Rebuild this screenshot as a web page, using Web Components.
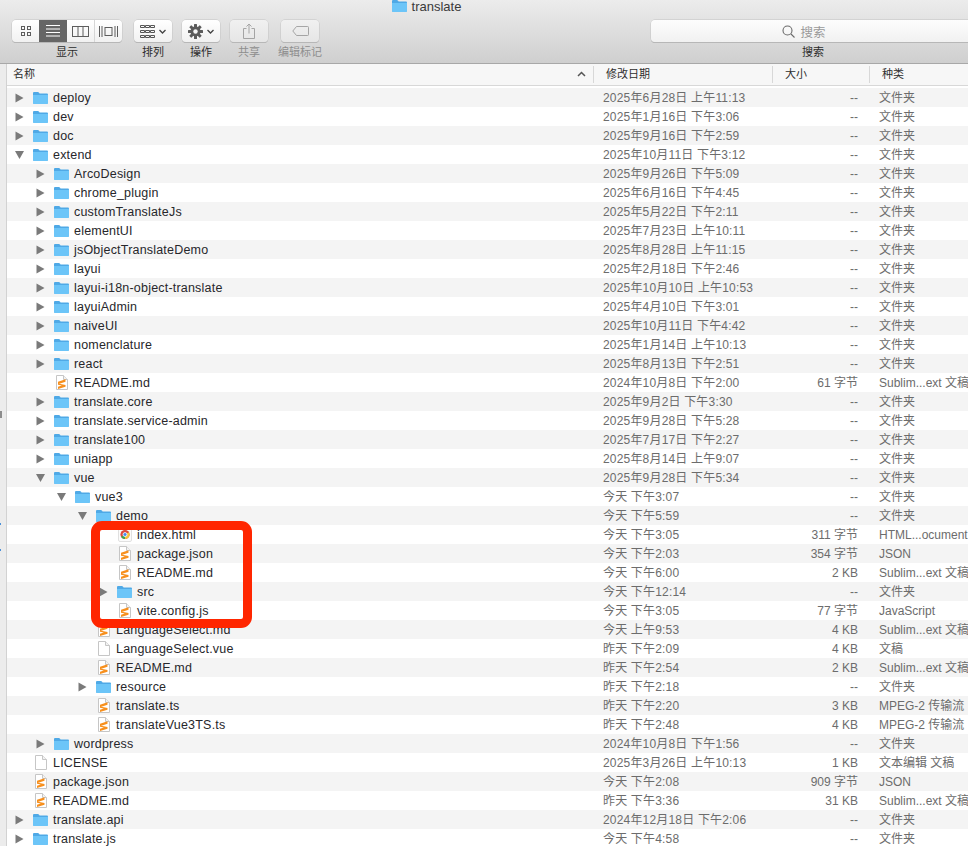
<!DOCTYPE html>
<html>
<head>
<meta charset="utf-8">
<title>translate</title>
<style>
  html, body { margin: 0; padding: 0; background: #fff; }
</style>
</head>
<body>
<finder-window>
  <finder-toolbar slot="toolbar"></finder-toolbar>
  <list-header slot="header"></list-header>
  <file-list slot="list"></file-list>
  <red-mark slot="mark"></red-mark>
</finder-window>

<script>
const FONT = `"Liberation Sans", "Noto Sans CJK SC", sans-serif`;

const folderSvg = `<svg width="17" height="14" viewBox="0 0 17 14"><path d="M1 2.200C1 1.500 1.500 1 2.200 1h3.600c.5 0 .8.200 1.100.6l.7 1h7.200c.7 0 1.200.5 1.200 1.200v8c0 .7-.5 1.200-1.200 1.200H2.200C1.500 13 1 12.500 1 11.800z" fill="#4fa9e6"/><path d="M1 4h15v7.800c0 .7-.5 1.200-1.200 1.200H2.200C1.500 13 1 12.500 1 11.800z" fill="#6cc5f8"/></svg>`;
const pageShape = `<path d="M3.500.5h7l4 4v10h-11z" fill="#fff" stroke="#c6c6c6"/><path d="M10.500.5v4h4" fill="#f2f2f2" stroke="#c6c6c6"/>`;
const docSvg = `<svg width="16" height="15" viewBox="0 0 16 15">${pageShape}</svg>`;
const sublimeSvg = `<svg width="16" height="15" viewBox="0 0 16 15">${pageShape}<path d="M5 6.800l7.500-2.500v2.400L5 9.200zM5 8.600l7.500 1.500v1.600L5 14v-2.300l3.800-1.200L5 9.700z" fill="#f7901e"/></svg>`;
const chromeSvg = `<svg width="16" height="15" viewBox="0 0 16 15"><rect x="2.500" y=".5" width="13" height="14" rx="1.500" fill="#fbfbfb" stroke="#e0e0e0"/><circle cx="9" cy="7.500" r="4.600" fill="#e0493b"/><path d="M9 7.500L5 9.800a4.600 4.600 0 0 0 4 2.300z" fill="#3aa655"/><path d="M9 7.500v4.600a4.600 4.600 0 0 0 4-6.900z" fill="#f7c53a"/><circle cx="9" cy="7.500" r="2" fill="#4a8bf0" stroke="#fff" stroke-width=".8"/></svg>`;
const ICONS = { folder: folderSvg, doc: docSvg, sublime: sublimeSvg, chrome: chromeSvg };

class FinderWindow extends HTMLElement {
  constructor() {
    super();
    this.attachShadow({ mode: "open" }).innerHTML = `
      <style>
        :host { display: flex; flex-direction: column; position: relative; width: 968px; height: 846px; overflow: hidden; font: 12px ${FONT}; }
        .body { display: flex; flex-direction: column; flex: 1; min-height: 0; padding-left: 7px;
          background: linear-gradient(#d2d2d2, #d2d2d2) 6px 0 / 1px 100% no-repeat, linear-gradient(#ececec, #ececec) 0 0 / 6px 100% no-repeat; position: relative; }
        .ticks { position: absolute; left: 0; top: 0; width: 2px; height: 100%; background:
          linear-gradient(#8d8d8d, #8d8d8d) 0 347px / 2px 7px no-repeat,
          linear-gradient(#4a90d9, #4a90d9) 0 459px / 1px 2px no-repeat,
          linear-gradient(#4a90d9, #4a90d9) 0 485px / 1px 2px no-repeat; }
        ::slotted([slot="list"]) { flex: 1; min-height: 0; }
      </style>
      <slot name="toolbar"></slot>
      <div class="body">
        <div class="ticks"></div>
        <slot name="header"></slot>
        <slot name="list"></slot>
      </div>
      <slot name="mark"></slot>`;
  }
}
customElements.define("finder-window", FinderWindow);

class ToolItem extends HTMLElement {
  constructor() {
    super();
    this.attachShadow({ mode: "open" }).innerHTML = `
      <style>
        :host { display: flex; flex-direction: column; align-items: center; gap: 3px; color: #2c2c2c; font-size: 11px; width: 38px; }
        :host([dim]) { color: #8e8e8e; }
        :host([wide]) { width: auto; }
        .label { height: 15px; line-height: 15px; white-space: nowrap; }
      </style>
      <slot></slot>
      <div class="label"><slot name="label"></slot></div>`;
  }
}
customElements.define("tool-item", ToolItem);

class FinderToolbar extends HTMLElement {
  constructor() {
    super();
    const btn = "btn";
    this.attachShadow({ mode: "open" }).innerHTML = `
      <style>
        :host { display: flex; flex-direction: column; height: 63px; border-bottom: 1px solid #a8a8a8;
          background: linear-gradient(#ececec, #e2e2e2 35%, #cfcfcf); }
        .title { height: 14px; margin-bottom: 6px; display: flex; justify-content: center; align-items: flex-start; gap: 4px; padding-right: 116px; color: #3a3a3a; font-size: 13px; }
        .title svg { margin-top: -1px; flex: none; }
        .title span { line-height: 13px; }
        .row { display: flex; align-items: flex-start; padding-left: 12px; }
        .btn { height: 22px; box-sizing: border-box; width: 38px; background: linear-gradient(#fff, #f1f1f1); border-radius: 4px;
          box-shadow: 0 0 0 .5px #c4c4c4, 0 1px 0 #aaa; display: flex; align-items: center; justify-content: center; gap: 4px; }
        .dim { background: linear-gradient(#f1f1f1, #e6e6e6); }
        .views { display: flex; width: 110px; height: 22px; background: linear-gradient(#fff, #f1f1f1); border-radius: 4px; box-shadow: 0 0 0 .5px #c4c4c4, 0 1px 0 #aaa; overflow: hidden; }
        .views > div { flex: 1; display: flex; align-items: center; justify-content: center; }
        .views > div + div { border-left: 1px solid #d6d6d6; }
        .views .on { background: #666; border-left: 0; }
        .views .on + div { border-left: 0; }
        .search .box { width: 324px; height: 22px; box-sizing: border-box; padding-right: 18px; background: linear-gradient(#fdfdfd, #f1f1f1); border-radius: 4px 0 0 4px; box-shadow: 0 0 0 .5px #c4c4c4, 0 1px 0 #aaa;
          display: flex; align-items: center; justify-content: center; gap: 5px; color: #9a9a9a; font-size: 12.500px; }
        .s1 { margin-left: 12px; } .s2 { margin-left: 10px; } .s3 { margin-left: 10px; } .s4 { margin-left: 13px; } .s5 { margin-left: 332px; }
        tool-item[dim] svg { opacity: .6; }
      </style>
      <div class="title">${folderSvg}<span>translate</span></div>
      <div class="row">
        <tool-item wide>
          <div class="views">
            <div><svg width="16" height="14" viewBox="0 0 16 14" fill="none" stroke="#5d5d5d"><rect x="3.500" y="2.500" width="3" height="3"/><rect x="9.500" y="2.500" width="3" height="3"/><rect x="3.500" y="8.500" width="3" height="3"/><rect x="9.500" y="8.500" width="3" height="3"/></svg></div>
            <div class="on"><svg width="16" height="12" viewBox="0 0 16 12" stroke="#fff"><path d="M1 .5h14M1 4h14M1 7.500h14M1 11h14"/></svg></div>
            <div><svg width="17" height="11" viewBox="0 0 17 11" fill="none" stroke="#5d5d5d"><rect x=".5" y=".5" width="16" height="10"/><path d="M6 .5v10M11 .5v10"/></svg></div>
            <div><svg width="19" height="11" viewBox="0 0 19 11" fill="none" stroke="#5d5d5d"><rect x="6" y="1.500" width="7" height="8"/><path d="M.5 0v11M3 0v11M16 0v11M18.500 0v11"/></svg></div>
          </div>
          <span slot="label">显示</span>
        </tool-item>
        <tool-item class="s1">
          <div class="${btn}"><svg width="15" height="13" viewBox="0 0 15 13" fill="none" stroke="#555"><path d="M.5 2.500h4v-2h-4zM5.500 2.500h4v-2h-4zM10.500 2.500h4v-2h-4zM.5 7.500h4v-2h-4zM5.500 7.500h4v-2h-4zM10.500 7.500h4v-2h-4zM.5 12.500h4v-2h-4zM5.500 12.500h4v-2h-4zM10.500 12.500h4v-2h-4z"/></svg><svg width="7" height="5" viewBox="0 0 7 5" fill="none" stroke="#444" stroke-width="1.300"><path d="M.5 1L3.500 4 6.500 1"/></svg></div>
          <span slot="label">排列</span>
        </tool-item>
        <tool-item class="s2">
          <div class="${btn}"><svg width="15" height="15" viewBox="0 0 15 15"><g fill="#5b5b5b"><circle cx="7.500" cy="7.500" r="5"/><rect x="6" y="0" width="3" height="15" rx=".5"/><rect x="6" y="0" width="3" height="15" rx=".5" transform="rotate(45 7.500 7.500)"/><rect x="6" y="0" width="3" height="15" rx=".5" transform="rotate(90 7.500 7.500)"/><rect x="6" y="0" width="3" height="15" rx=".5" transform="rotate(135 7.500 7.500)"/></g><circle cx="7.500" cy="7.500" r="2.200" fill="#f6f6f6"/></svg><svg width="7" height="5" viewBox="0 0 7 5" fill="none" stroke="#444" stroke-width="1.300"><path d="M.5 1L3.500 4 6.500 1"/></svg></div>
          <span slot="label">操作</span>
        </tool-item>
        <tool-item class="s3" dim>
          <div class="${btn} dim"><svg width="12" height="16" viewBox="0 0 12 16" fill="none" stroke="#777"><path d="M3.500 5.500H.5v10h11v-10h-3M6 10.500V1M3.500 3.500L6 1l2.500 2.500"/></svg></div>
          <span slot="label">共享</span>
        </tool-item>
        <tool-item class="s4" dim>
          <div class="${btn} dim"><svg width="17" height="10" viewBox="0 0 17 10" fill="none" stroke="#777"><path d="M.8 5L4.500.5h11.200c.5 0 .8.300.8.800v7.400c0 .5-.3.800-.8.800H4.500z"/></svg></div>
          <span slot="label">编辑标记</span>
        </tool-item>
        <tool-item class="s5 search" wide>
          <div class="box"><svg width="13" height="13" viewBox="0 0 13 13" fill="none" stroke="#6a6a6a" stroke-width="1.100"><circle cx="5.500" cy="5.500" r="4.500"/><path d="M9 9l3.500 3.500"/></svg><span>搜索</span></div>
          <span slot="label">搜索</span>
        </tool-item>
      </div>`;
  }
}
customElements.define("finder-toolbar", FinderToolbar);

class ListHeader extends HTMLElement {
  constructor() {
    super();
    this.attachShadow({ mode: "open" }).innerHTML = `
      <style>
        :host { display: grid; grid-template-columns: 586px 179px 97px 1fr; height: 22px; box-sizing: border-box; border-bottom: 1px solid #d8d8d8; margin-bottom: 2px;
          background: #f7f7f7; color: #2e2e2e; font-size: 11px; line-height: 21px; }
        div { padding-left: 6px; display: flex; justify-content: space-between; }
        div + div { border-left: 1px solid #d8d8d8; margin: 2px 0 2px; line-height: 17px; padding-left: 12px; }
        svg { margin: 7px 7px 0 0; }
      </style>
      <div><span>名称</span><svg width="9" height="6" viewBox="0 0 9 6" fill="none" stroke="#555" stroke-width="1.500"><path d="M1 5L4.500 1.500 8 5"/></svg></div>
      <div><span>修改日期</span></div>
      <div><span>大小</span></div>
      <div><span>种类</span></div>`;
  }
}
customElements.define("list-header", ListHeader);

class FileRow extends HTMLElement {
  connectedCallback() {
    const a = n => this.getAttribute(n) || "";
    const depth = +a("depth");
    const type = a("type") || "folder";
    const twist = type === "folder"
      ? `<svg width="9" height="10" viewBox="0 0 9 10"><path d="${a("open") ? "M0 1h9L4.500 9z" : "M.5 .5L8.500 5 .5 9.500z"}" fill="#7a7a7a"/></svg>`
      : "";
    this.attachShadow({ mode: "open" }).innerHTML = `
      <style>
        :host { display: grid; grid-template-columns: 589px 176px 86px 1fr; grid-template-rows: 19px; height: 19px; line-height: 21px; background: #fff; white-space: nowrap; color: #6c6c6c; font-size: 12px; }
        :host([odd]) { background: #f4f4f4; }
        .name { display: flex; align-items: center; color: #27272b; font-size: 12.500px; letter-spacing: .2px; line-height: 19px; padding-left: calc(${depth} * 21px); }
        .txt { padding-top: 2px; }
        .tw-box { width: 25px; flex: none; padding-left: 8px; box-sizing: border-box; display: flex; }
        .icon { width: 21px; flex: none; display: flex; align-items: center; }
        .date { padding-left: 7px; letter-spacing: .18px; }
        .size { text-align: right; }
        .kind { padding-left: 21px; }
      </style>
      <div class="name"><span class="tw-box">${twist}</span><span class="icon">${ICONS[type]}</span><span class="txt"><slot></slot></span></div>
      <div class="date">${a("date")}</div>
      <div class="size">${a("size") || "--"}</div>
      <div class="kind">${a("kind") || "文件夹"}</div>`;
  }
}
customElements.define("file-row", FileRow);

const SUB = "Sublim...ext 文稿", MP = "MPEG-2 传输流";
const FILES = [
  [0, "deploy", "2025年6月28日 上午11:13"],
  [0, "dev", "2025年1月16日 下午3:06"],
  [0, "doc", "2025年9月16日 下午2:59"],
  [0, "extend", "2025年10月11日 下午3:12", "", "", "", 1],
  [1, "ArcoDesign", "2025年9月26日 下午5:09"],
  [1, "chrome_plugin", "2025年6月16日 下午4:45"],
  [1, "customTranslateJs", "2025年5月22日 下午2:11"],
  [1, "elementUI", "2025年7月23日 上午10:11"],
  [1, "jsObjectTranslateDemo", "2025年8月28日 上午11:15"],
  [1, "layui", "2025年2月18日 下午2:46"],
  [1, "layui-i18n-object-translate", "2025年10月10日 上午10:53"],
  [1, "layuiAdmin", "2025年4月10日 下午3:01"],
  [1, "naiveUI", "2025年10月11日 下午4:42"],
  [1, "nomenclature", "2025年1月14日 上午10:13"],
  [1, "react", "2025年8月13日 下午2:51"],
  [1, "README.md", "2024年10月8日 下午2:00", "61 字节", SUB, "sublime"],
  [1, "translate.core", "2025年9月2日 下午3:30"],
  [1, "translate.service-admin", "2025年9月28日 下午5:28"],
  [1, "translate100", "2025年7月17日 下午2:27"],
  [1, "uniapp", "2025年8月14日 上午9:07"],
  [1, "vue", "2025年9月28日 下午5:34", "", "", "", 1],
  [2, "vue3", "今天 下午3:07", "", "", "", 1],
  [3, "demo", "今天 下午5:59", "", "", "", 1],
  [4, "index.html", "今天 下午3:05", "311 字节", "HTML...ocument", "chrome"],
  [4, "package.json", "今天 下午2:03", "354 字节", "JSON", "sublime"],
  [4, "README.md", "今天 下午6:00", "2 KB", SUB, "sublime"],
  [4, "src", "今天 下午12:14"],
  [4, "vite.config.js", "今天 下午3:05", "77 字节", "JavaScript", "sublime"],
  [3, "LanguageSelect.md", "今天 上午9:53", "4 KB", SUB, "sublime"],
  [3, "LanguageSelect.vue", "昨天 下午2:09", "4 KB", "文稿", "doc"],
  [3, "README.md", "昨天 下午2:54", "2 KB", SUB, "sublime"],
  [3, "resource", "昨天 下午2:18"],
  [3, "translate.ts", "昨天 下午2:20", "3 KB", MP, "sublime"],
  [3, "translateVue3TS.ts", "昨天 下午2:48", "4 KB", MP, "sublime"],
  [1, "wordpress", "2024年10月8日 下午1:56"],
  [0, "LICENSE", "2025年3月26日 上午10:13", "1 KB", "文本编辑 文稿", "doc"],
  [0, "package.json", "今天 下午2:08", "909 字节", "JSON", "sublime"],
  [0, "README.md", "昨天 下午3:36", "31 KB", SUB, "sublime"],
  [0, "translate.api", "2024年12月18日 下午2:06"],
  [0, "translate.js", "今天 下午4:58"],
];

class FileList extends HTMLElement {
  constructor() {
    super();
    this.attachShadow({ mode: "open" }).innerHTML = `<style>:host { display: block; overflow: hidden; }</style><slot></slot>`;
  }
  connectedCallback() {
    if (this.children.length) return;
    FILES.forEach((f, i) => {
      const row = document.createElement("file-row");
      row.setAttribute("depth", f[0]);
      row.setAttribute("date", f[2]);
      if (f[3]) row.setAttribute("size", f[3]);
      if (f[4]) row.setAttribute("kind", f[4]);
      if (f[5]) row.setAttribute("type", f[5]);
      if (f[6]) row.setAttribute("open", "1");
      if (i % 2 === 0) row.setAttribute("odd", "");
      row.textContent = f[1];
      this.appendChild(row);
    });
  }
}
customElements.define("file-list", FileList);

// red annotation drawn over the list
class RedMark extends HTMLElement {
  constructor() {
    super();
    this.attachShadow({ mode: "open" }).innerHTML = `
      <style>
        :host { position: absolute; left: 91px; top: 521px; width: 161px; height: 107px; box-sizing: border-box;
          border: 9px solid #ff2600; border-radius: 11px; }
      </style>`;
  }
}
customElements.define("red-mark", RedMark);
</script>
</body>
</html>
